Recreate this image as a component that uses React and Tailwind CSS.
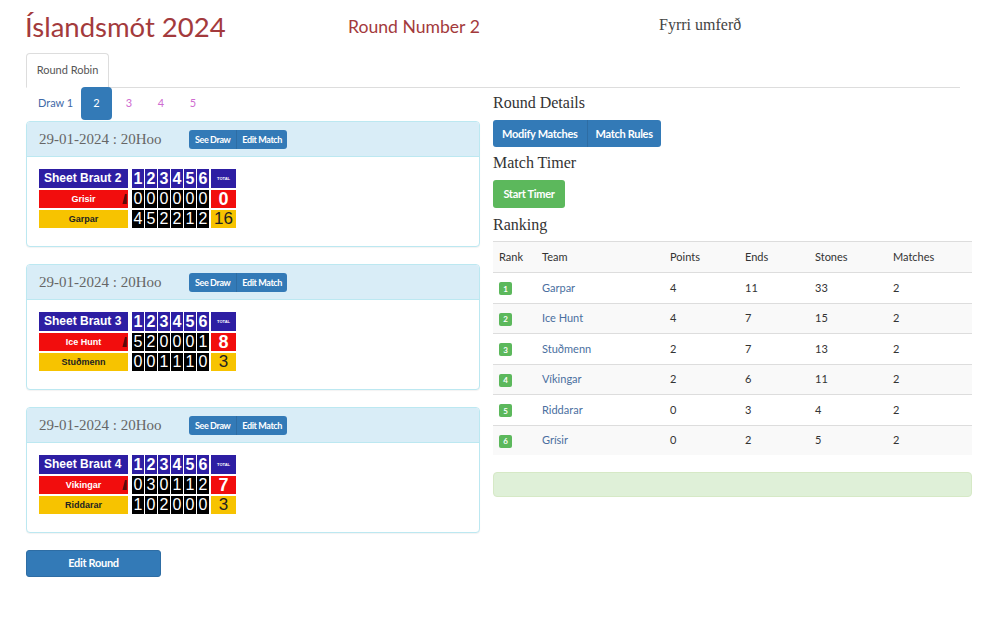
import React from "react";

const sans = { fontFamily: "Lato, 'Open Sans', sans-serif" };

function Hammer() {
  return (
    <svg width="5" height="12" viewBox="0 0 5 12" className="absolute right-[1px] top-[3px]">
      <path d="M0.5 11 L3 1 L4.8 1 L4.8 11 Z" fill="#5a0a0a" />
    </svg>
  );
}

function Score({ sheet, a, b }) {
  const digitHead = "w-[12px] h-[19px] bg-[#2d1ea3] text-white font-bold text-[16px] leading-[19px] text-center";
  const digit = "w-[12px] h-[18px] bg-black text-white text-[16px] leading-[18px] text-center";
  return (
    <div className="flex flex-col gap-[2px]" style={{ fontFamily: "'Liberation Sans', Arial, sans-serif" }}>
      <div className="flex">
        <div className="w-[89px] h-[19px] bg-[#2d1ea3] text-white font-bold text-[12px] leading-[19px] pl-[5px]">{sheet}</div>
        <div className="flex gap-[1px] ml-[4px]">
          {[1, 2, 3, 4, 5, 6].map((n) => (
            <div key={n} className={digitHead}>{n}</div>
          ))}
        </div>
        <div className="w-[25px] h-[19px] ml-[2px] bg-[#2d1ea3] text-white font-bold text-[4px] leading-[19px] text-center">TOTAL</div>
      </div>
      <div className="flex">
        <div className="relative w-[89px] h-[18px] bg-[#f20d0d] text-white font-bold text-[9px] leading-[18px] text-center">
          {a.name}
          <Hammer />
        </div>
        <div className="flex gap-[1px] ml-[4px]">
          {a.ends.map((n, i) => (
            <div key={i} className={digit}>{n}</div>
          ))}
        </div>
        <div className="w-[25px] h-[18px] ml-[2px] bg-[#f20d0d] text-white font-bold text-[18px] leading-[18px] text-center">{a.total}</div>
      </div>
      <div className="flex">
        <div className="w-[89px] h-[18px] bg-[#f7c300] text-[#222] font-bold text-[9px] leading-[18px] text-center">{b.name}</div>
        <div className="flex gap-[1px] ml-[4px]">
          {b.ends.map((n, i) => (
            <div key={i} className={digit}>{n}</div>
          ))}
        </div>
        <div className="w-[25px] h-[18px] ml-[2px] bg-[#f7c300] text-[#222] text-[17px] leading-[18px] text-center">{b.total}</div>
      </div>
    </div>
  );
}

function MatchPanel({ sheet, a, b }) {
  return (
    <div className="border border-[#bce8f1] rounded-[4px] shadow-[0_1px_1px_rgba(0,0,0,0.05)] bg-white">
      <div className="h-[35px] bg-[#d9edf7] border-b border-[#bce8f1] rounded-t-[3px] flex items-center pl-[12px]">
        <div className="w-[150px] text-[15px] text-[#666]" style={{ fontFamily: "'Liberation Serif', Georgia, serif" }}>
          29-01-2024 : 20Hoo
        </div>
        <div className="flex h-[19px] bg-[#337ab7] rounded-[3px] text-white text-[9px] font-bold tracking-[-0.4px] leading-[19px]" style={sans}>
          <span className="px-[6px]">See Draw</span>
          <span className="px-[5px] border-l border-[#2e6da4]">Edit Match</span>
        </div>
      </div>
      <div className="pt-[12px] pb-[18px] pl-[12px]">
        <Score sheet={sheet} a={a} b={b} />
      </div>
    </div>
  );
}

const ranking = [
  [1, "Garpar", 4, 11, 33, 2],
  [2, "Ice Hunt", 4, 7, 15, 2],
  [3, "Stuðmenn", 2, 7, 13, 2],
  [4, "Víkingar", 2, 6, 11, 2],
  [5, "Riddarar", 0, 3, 4, 2],
  [6, "Grísir", 0, 2, 5, 2],
];

const cols = ["w-[43px]", "w-[128px]", "w-[75px]", "w-[70px]", "w-[78px]", "w-[85px]"];

export default function App() {
  const serif = { fontFamily: "'Liberation Serif', Georgia, serif" };
  return (
    <div className="w-[992px] h-[617px] bg-white text-[#333] overflow-hidden" style={sans}>
      <div className="pl-[25px] pt-[8px] flex items-start">
        <div className="w-[323px] text-[27.5px] leading-[38px] text-[#a33a3c]">Íslandsmót 2024</div>
        <div className="w-[311px] pt-[7px] text-[17.6px] leading-[24px] text-[#a33a3c]">Round Number 2</div>
        <div className="pt-[5px] text-[16px] text-[#444]" style={serif}>Fyrri umferð</div>
      </div>

      <div className="ml-[26px] mr-[32px] mt-[7px] border-b border-[#ddd] flex">
        <div className="w-[83px] h-[35px] border border-[#ddd] border-b-white -mb-px rounded-t-[4px] bg-white text-[11px] text-[#555] flex items-center justify-center">
          Round Robin
        </div>
      </div>

      <div className="flex pl-[26px] gap-[13px]">
        <div className="w-[454px] flex flex-col">
          <div className="flex h-[33px] -mt-px items-center text-[11px] gap-[2px]">
            <div className="w-[53px] h-full flex items-center pl-[12px] text-[#3f6aa8]">Draw 1</div>
            <div className="w-[31px] h-full flex items-center justify-center bg-[#337ab7] text-white rounded-[4px]">2</div>
            <div className="w-[30px] h-full flex items-center justify-center text-[#cf6cd0]">3</div>
            <div className="w-[30px] h-full flex items-center justify-center text-[#cf6cd0]">4</div>
            <div className="w-[30px] h-full flex items-center justify-center text-[#cf6cd0]">5</div>
          </div>
          <div className="mt-[1px] flex flex-col gap-[17px]">
            <MatchPanel
              sheet="Sheet Braut 2"
              a={{ name: "Grisir", ends: [0, 0, 0, 0, 0, 0], total: 0 }}
              b={{ name: "Garpar", ends: [4, 5, 2, 2, 1, 2], total: 16 }}
            />
            <MatchPanel
              sheet="Sheet Braut 3"
              a={{ name: "Ice Hunt", ends: [5, 2, 0, 0, 0, 1], total: 8 }}
              b={{ name: "Stuðmenn", ends: [0, 0, 1, 1, 1, 0], total: 3 }}
            />
            <MatchPanel
              sheet="Sheet Braut 4"
              a={{ name: "Vikingar", ends: [0, 3, 0, 1, 1, 2], total: 7 }}
              b={{ name: "Riddarar", ends: [1, 0, 2, 0, 0, 0], total: 3 }}
            />
          </div>
          <button className="mt-[17px] w-[135px] h-[27px] bg-[#337ab7] border border-[#2e6da4] rounded-[3px] text-white text-[11px] font-bold tracking-[-0.3px]">
            Edit Round
          </button>
        </div>

        <div className="w-[479px] flex flex-col pt-[4px]">
          <div className="text-[16px] leading-[22px] text-[#333]" style={serif}>Round Details</div>
          <div className="mt-[6px] flex h-[27px] w-fit bg-[#337ab7] rounded-[3px] text-white text-[11px] font-bold tracking-[-0.3px] leading-[27px]">
            <span className="px-[9px]">Modify Matches</span>
            <span className="px-[8px] border-l border-[#2e6da4]">Match Rules</span>
          </div>
          <div className="mt-[5px] text-[16px] leading-[22px] text-[#333]" style={serif}>Match Timer</div>
          <div className="mt-[6px] w-[72px] h-[28px] bg-[#5cb85c] rounded-[3px] text-white text-[11px] font-bold tracking-[-0.3px] flex items-center justify-center">
            Start Timer
          </div>
          <div className="mt-[6px] text-[16px] leading-[22px] text-[#333]" style={serif}>Ranking</div>
          <div className="mt-[5px] text-[11px]">
            <div className="flex h-[31px] items-center bg-[#f9f9f9] border-t border-[#ddd]">
              {["Rank", "Team", "Points", "Ends", "Stones", "Matches"].map((h, i) => (
                <div key={h} className={`${cols[i]} pl-[6px]`}>{h}</div>
              ))}
            </div>
            {ranking.map((r, idx) => (
              <div
                key={r[0]}
                className={`flex h-[30.5px] items-center border-t border-[#ddd] ${idx % 2 === 1 ? "bg-[#f9f9f9]" : "bg-white"}`}
              >
                <div className={`${cols[0]} pl-[6px]`}>
                  <span className="inline-flex w-[13px] h-[13px] bg-[#5cb85c] rounded-[2px] text-white text-[8px] font-bold items-center justify-center">
                    {r[0]}
                  </span>
                </div>
                <div className={`${cols[1]} pl-[6px] text-[#4a6fa0]`}>{r[1]}</div>
                <div className={`${cols[2]} pl-[6px]`}>{r[2]}</div>
                <div className={`${cols[3]} pl-[6px]`}>{r[3]}</div>
                <div className={`${cols[4]} pl-[6px]`}>{r[4]}</div>
                <div className={`${cols[5]} pl-[6px]`}>{r[5]}</div>
              </div>
            ))}
          </div>
          <div className="mt-[17px] h-[25px] bg-[#dff0d8] border border-[#d6e9c6] rounded-[4px]" />
        </div>
      </div>
    </div>
  );
}
